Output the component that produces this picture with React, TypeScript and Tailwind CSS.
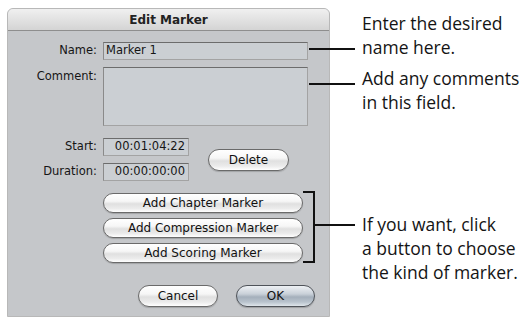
export default function App() {
  const field =
    "bg-[#cbcfd3] border border-[#a3a3a3] border-t-[#6c6c6c] border-l-[#8a8a8a]";
  const aqua =
    "rounded-full border border-[#6a6a6a] bg-[linear-gradient(to_bottom,#ffffff_0%,#f6f6f6_40%,#e0e0e0_55%,#ebebeb_80%,#ffffff_100%)] shadow-[0_1px_1px_rgba(0,0,0,0.18)] flex items-center justify-center text-[12px] text-[#111]";
  return (
    <div className="relative w-[532px] h-[320px] bg-white flex overflow-hidden">
      <div className="ml-[7px] mt-[8px] w-[323px] h-[309px] flex flex-col rounded-t-[6px] border border-[#b8b8b8] bg-[#c5c7ca] font-['DejaVu_Sans',sans-serif] text-[11.5px] text-[#151515]">
        <div className="h-[22px] flex items-center justify-center rounded-t-[5px] border-b border-[#8e8e8e] bg-[linear-gradient(to_bottom,#f0f0f0,#d4d4d4)] font-bold text-[12px] text-[#222]">
          Edit Marker
        </div>
        <div className="mt-[11px] flex items-center">
          <div className="w-[89px] text-right">Name:</div>
          <div className={`ml-[6px] w-[205px] h-[18px] px-[2px] flex items-center ${field}`}>
            Marker 1
          </div>
        </div>
        <div className="mt-[7px] flex items-start">
          <div className="w-[89px] text-right pt-[1px]">Comment:</div>
          <div className={`ml-[6px] w-[205px] h-[59px] ${field}`}></div>
        </div>
        <div className="mt-[12px] flex items-center">
          <div className="flex flex-col gap-[7px]">
            <div className="flex items-center">
              <div className="w-[89px] text-right">Start:</div>
              <div className={`ml-[6px] w-[86px] h-[18px] pr-[3px] flex items-center justify-end ${field}`}>
                00:01:04:22
              </div>
            </div>
            <div className="flex items-center">
              <div className="w-[89px] text-right">Duration:</div>
              <div className={`ml-[6px] w-[86px] h-[18px] pr-[3px] flex items-center justify-end ${field}`}>
                00:00:00:00
              </div>
            </div>
          </div>
          <div className={`ml-[19px] w-[81px] h-[22px] ${aqua}`}>Delete</div>
        </div>
        <div className="mt-[12px] pl-[95px] flex flex-col gap-[5px]">
          <div className={`w-[200px] h-[20px] ${aqua}`}>Add Chapter Marker</div>
          <div className={`w-[200px] h-[20px] ${aqua}`}>Add Compression Marker</div>
          <div className={`w-[200px] h-[20px] ${aqua}`}>Add Scoring Marker</div>
        </div>
        <div className="mt-[22px] pr-[14px] flex justify-end gap-[18px]">
          <div className={`w-[80px] h-[22px] ${aqua}`}>Cancel</div>
          <div className="w-[79px] h-[22px] rounded-full border border-[#4f5359] bg-[linear-gradient(to_bottom,#eef1f4_0%,#c9d0d8_40%,#a4afbb_55%,#b9c3cd_80%,#dfe5ea_100%)] shadow-[0_1px_1px_rgba(0,0,0,0.2)] flex items-center justify-center text-[12px] text-[#111]">
            OK
          </div>
        </div>
      </div>

      <div className="ml-[32px] pt-[11px] flex flex-col font-['Open_Sans',sans-serif] text-[17.5px] leading-[24px] text-[#141414]">
        <div>
          <div>Enter the desired</div>
          <div>name here.</div>
        </div>
        <div className="mt-[7px]">
          <div>Add any comments</div>
          <div>in this field.</div>
        </div>
        <div className="mt-[98px]">
          <div>If you want, click</div>
          <div>a button to choose</div>
          <div>the kind of marker.</div>
        </div>
      </div>

      <div className="absolute left-[309px] top-[48px] w-[46px] h-[2px] bg-[#111]"></div>
      <div className="absolute left-[309px] top-[83px] w-[46px] h-[2px] bg-[#111]"></div>
      <div className="absolute left-[303px] top-[191px] w-[12px] h-[72px] border-y-2 border-r-2 border-[#111]"></div>
      <div className="absolute left-[315px] top-[224px] w-[40px] h-[2px] bg-[#111]"></div>
    </div>
  );
}
